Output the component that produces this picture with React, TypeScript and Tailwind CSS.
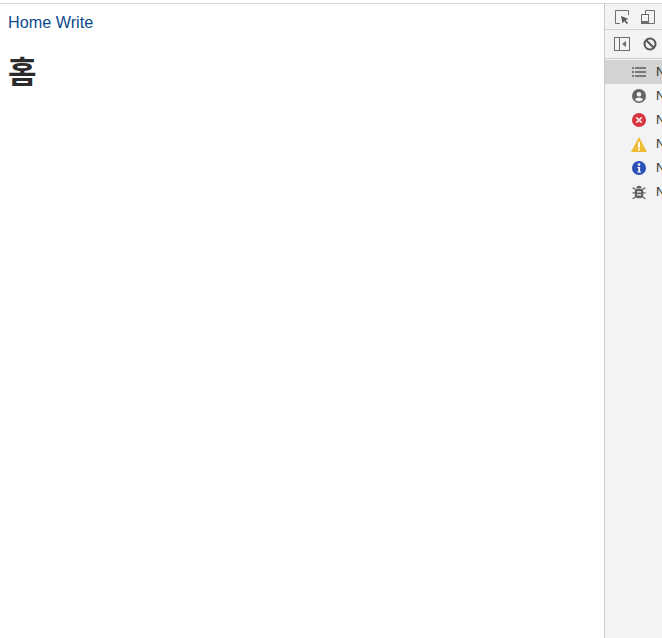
function ListIcon() {
  return (
    <svg width="16" height="16" viewBox="0 0 16 16" fill="#7a7a7a">
      <rect x="1" y="3" width="2" height="2" />
      <rect x="4" y="3" width="11" height="2" />
      <rect x="1" y="7" width="2" height="2" />
      <rect x="4" y="7" width="11" height="2" />
      <rect x="1" y="11" width="2" height="2" />
      <rect x="4" y="11" width="11" height="2" />
    </svg>
  );
}

function UserIcon() {
  return (
    <svg width="14" height="14" viewBox="0 0 14 14">
      <circle cx="7" cy="7" r="7" fill="#636363" />
      <circle cx="7" cy="5.200" r="2.300" fill="#f1f3f5" />
      <path d="M3 10.800c.6-1.500 2.200-2.200 4-2.200s3.400.7 4 2.200A5.200 5.200 0 0 1 7 12.400a5.200 5.200 0 0 1-4-1.600z" fill="#f1f3f5" />
    </svg>
  );
}

function ErrorIcon() {
  return (
    <svg width="14" height="14" viewBox="0 0 14 14">
      <circle cx="7" cy="7" r="7" fill="#d8343d" />
      <path d="M4.300 4.300l5.400 5.400M9.700 4.300l-5.400 5.400" stroke="#f3dfe0" strokeWidth="1.900" />
    </svg>
  );
}

function WarningIcon() {
  return (
    <svg width="16" height="15" viewBox="0 0 16 15">
      <path d="M8 0L16 15H0z" fill="#f0bb35" />
      <rect x="7" y="5" width="2" height="5.500" fill="#fff" />
      <rect x="7" y="11.500" width="2" height="2" fill="#fff" />
    </svg>
  );
}

function InfoIcon() {
  return (
    <svg width="14" height="14" viewBox="0 0 14 14">
      <circle cx="7" cy="7" r="7" fill="#2a4fb5" />
      <circle cx="7" cy="3.600" r="1.300" fill="#fff" />
      <path d="M5.400 6h2.700v4.400h1v1.100H5.200v-1.100h1.100V7.100h-.9z" fill="#fff" />
    </svg>
  );
}

function BugIcon() {
  return (
    <svg width="14" height="14" viewBox="0 0 14 14" fill="#636363">
      <path d="M4.200 3C4.600 1.600 5.700.8 7 .8s2.400.8 2.800 2.200z" />
      <rect x="2.800" y="3.600" width="8.400" height="9.600" rx="3" />
      <path d="M.5 2.500h1.600L4 4.500l-.8.8-1.600-1.600H.5zM13.500 2.500h-1.600L10 4.500l.8.8 1.600-1.600h1.100zM.5 7.200h3v1.400h-3zM10.500 7.200h3v1.400h-3zM.5 12.800h1.100L3.400 10.700l.8.800-2.200 2.400H.5zM13.500 12.800h-1.100l-1.800-2.100-.8.800 2.200 2.400h1.500z" />
      <rect x="5" y="6.200" width="4" height="1.300" fill="#f1f3f5" />
      <rect x="5" y="9.200" width="4" height="1.300" fill="#f1f3f5" />
    </svg>
  );
}

const rows = [
  { icon: <ListIcon />, active: true },
  { icon: <UserIcon />, active: false },
  { icon: <ErrorIcon />, active: false },
  { icon: <WarningIcon />, active: false },
  { icon: <InfoIcon />, active: false },
  { icon: <BugIcon />, active: false },
];

export default function App() {
  return (
    <div className="h-[638px] w-[662px] overflow-hidden bg-white pt-[3px] font-['Liberation_Sans',sans-serif]">
      <div className="flex h-[635px] border-t border-t-[#d4d4d4]">
        <main className="flex-1 px-2">
          <nav className="mt-[8px] text-[16.2px] leading-5 text-[#0b4a8c]">
            <a href="#">Home</a> <a href="#">Write</a>
          </nav>
          <h1 className="mt-[18px] text-[31px] leading-10 font-bold text-[#2b2b2b] font-['Noto_Sans_CJK_KR',sans-serif]">
            홈
          </h1>
        </main>

        <aside className="w-[58px] shrink-0 border-l border-[#c9c9c9] bg-[#f1f3f5]">
          <div className="flex h-[26px] items-center gap-[10px] border-b border-[#d0d0d0] pl-[9px]">
            <svg width="16" height="16" viewBox="0 0 16 16" fill="none">
              <path d="M6 14.500H1.500v-13h13V6" stroke="#6e6e6e" strokeWidth="1" />
              <path d="M7 7l7.500 3-3 1 2.500 3-1.300 1-2.500-3-1.700 2.500z" fill="#555" />
            </svg>
            <svg width="16" height="16" viewBox="0 0 16 16" fill="none" stroke="#6e6e6e">
              <path d="M5.500 5V1.500h9v13h-9" />
              <rect x="1.500" y="5.500" width="7" height="9" />
              <rect x="2" y="12" width="6" height="2" fill="#6e6e6e" stroke="none" />
            </svg>
          </div>
          <div className="flex h-[29px] items-center gap-[13px] border-b border-[#d0d0d0] pl-[9px]">
            <svg width="16" height="14" viewBox="0 0 16 14" fill="none" stroke="#6e6e6e">
              <rect x="0.500" y="0.500" width="15" height="13" />
              <path d="M5.500 0.500v13" />
              <path d="M12 4v6L8 7z" fill="#6e6e6e" stroke="none" />
            </svg>
            <svg width="14" height="14" viewBox="0 0 14 14" fill="none" stroke="#555" strokeWidth="2">
              <circle cx="7" cy="7" r="5.500" />
              <path d="M3 3l8 8" />
            </svg>
          </div>
          <ul className="pt-[1px]">
            {rows.map((row, i) => (
              <li
                key={i}
                className={
                  row.active
                    ? "flex h-6 items-center bg-[#d3d3d3]"
                    : "flex h-6 items-center"
                }
              >
                <span className="flex w-[51px] shrink-0 justify-center pl-[17px]">
                  {row.icon}
                </span>
                <span className="text-[13px] text-[#333]">N</span>
              </li>
            ))}
          </ul>
        </aside>
      </div>
    </div>
  );
}
